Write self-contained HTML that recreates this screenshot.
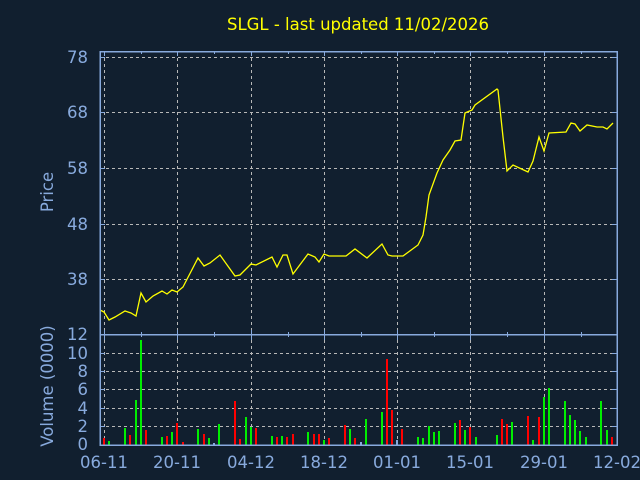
<!DOCTYPE html>
<html><head><meta charset="utf-8"><style>
html,body{margin:0;padding:0;background:#111f2f;width:640px;height:480px;overflow:hidden}
svg{display:block}
text{font-family:"DejaVu Sans","Liberation Sans",sans-serif}
</style></head><body>
<svg width="640" height="480" viewBox="0 0 640 480" xmlns="http://www.w3.org/2000/svg">
<rect width="640" height="480" fill="#111f2f"/>
<text x="358" y="30" fill="#ffff00" font-size="16.5" text-anchor="middle">SLGL - last updated 11/02/2026</text>
<g stroke="#b8b8b8" stroke-width="1" stroke-dasharray="3,3" shape-rendering="crispEdges">
<line x1="100" y1="57.5" x2="617" y2="57.5"/>
<line x1="100" y1="112.5" x2="617" y2="112.5"/>
<line x1="100" y1="168.5" x2="617" y2="168.5"/>
<line x1="100" y1="224.5" x2="617" y2="224.5"/>
<line x1="100" y1="279.5" x2="617" y2="279.5"/>
<line x1="100" y1="353.5" x2="617" y2="353.5"/>
<line x1="100" y1="371.5" x2="617" y2="371.5"/>
<line x1="100" y1="389.5" x2="617" y2="389.5"/>
<line x1="100" y1="408.5" x2="617" y2="408.5"/>
<line x1="100" y1="426.5" x2="617" y2="426.5"/>
<g>
<line x1="104.5" y1="52" x2="104.5" y2="445"/>
<line x1="177.5" y1="52" x2="177.5" y2="445"/>
<line x1="251.5" y1="52" x2="251.5" y2="445"/>
<line x1="324.5" y1="52" x2="324.5" y2="445"/>
<line x1="397.5" y1="52" x2="397.5" y2="445"/>
<line x1="470.5" y1="52" x2="470.5" y2="445"/>
<line x1="544.5" y1="52" x2="544.5" y2="445"/>
</g>
</g>
<g stroke-width="2" shape-rendering="crispEdges">
<g stroke="#ff0000">
<line x1="104" y1="445" x2="104" y2="438"/><line x1="130" y1="445" x2="130" y2="435"/><line x1="146" y1="445" x2="146" y2="430"/><line x1="167" y1="445" x2="167" y2="436"/><line x1="177" y1="445" x2="177" y2="423"/><line x1="183" y1="445" x2="183" y2="442"/><line x1="204" y1="445" x2="204" y2="434"/><line x1="235" y1="445" x2="235" y2="401"/><line x1="240" y1="445" x2="240" y2="439"/><line x1="256" y1="445" x2="256" y2="428"/><line x1="277" y1="445" x2="277" y2="437"/><line x1="287" y1="445" x2="287" y2="437"/><line x1="293" y1="445" x2="293" y2="434"/><line x1="314" y1="445" x2="314" y2="434"/><line x1="319" y1="445" x2="319" y2="434"/><line x1="329" y1="445" x2="329" y2="438"/><line x1="345" y1="445" x2="345" y2="425"/><line x1="355" y1="445" x2="355" y2="438"/><line x1="387" y1="445" x2="387" y2="359"/><line x1="392" y1="445" x2="392" y2="410"/><line x1="402" y1="445" x2="402" y2="429"/><line x1="460" y1="445" x2="460" y2="420"/><line x1="470" y1="445" x2="470" y2="427"/><line x1="502" y1="445" x2="502" y2="419"/><line x1="507" y1="445" x2="507" y2="424"/><line x1="528" y1="445" x2="528" y2="416"/><line x1="539" y1="445" x2="539" y2="417"/><line x1="612" y1="445" x2="612" y2="437"/>
</g>
<g stroke="#00ee00">
<line x1="109" y1="445" x2="109" y2="441"/><line x1="125" y1="445" x2="125" y2="428"/><line x1="136" y1="445" x2="136" y2="400"/><line x1="141" y1="445" x2="141" y2="340"/><line x1="162" y1="445" x2="162" y2="437"/><line x1="172" y1="445" x2="172" y2="432"/><line x1="198" y1="445" x2="198" y2="429"/><line x1="209" y1="445" x2="209" y2="438"/><line x1="219" y1="445" x2="219" y2="424"/><line x1="246" y1="445" x2="246" y2="417"/><line x1="251" y1="445" x2="251" y2="427"/><line x1="272" y1="445" x2="272" y2="436"/><line x1="282" y1="445" x2="282" y2="436"/><line x1="308" y1="445" x2="308" y2="432"/><line x1="324" y1="445" x2="324" y2="440"/><line x1="350" y1="445" x2="350" y2="429"/><line x1="366" y1="445" x2="366" y2="419"/><line x1="382" y1="445" x2="382" y2="412"/><line x1="418" y1="445" x2="418" y2="437"/><line x1="423" y1="445" x2="423" y2="438"/><line x1="429" y1="445" x2="429" y2="426"/><line x1="434" y1="445" x2="434" y2="432"/><line x1="439" y1="445" x2="439" y2="431"/><line x1="455" y1="445" x2="455" y2="423"/><line x1="465" y1="445" x2="465" y2="430"/><line x1="476" y1="445" x2="476" y2="437"/><line x1="497" y1="445" x2="497" y2="435"/><line x1="512" y1="445" x2="512" y2="422"/><line x1="533" y1="445" x2="533" y2="440"/><line x1="544" y1="445" x2="544" y2="397"/><line x1="549" y1="445" x2="549" y2="388"/><line x1="565" y1="445" x2="565" y2="401"/><line x1="570" y1="445" x2="570" y2="415"/><line x1="575" y1="445" x2="575" y2="420"/><line x1="580" y1="445" x2="580" y2="431"/><line x1="586" y1="445" x2="586" y2="437"/><line x1="601" y1="445" x2="601" y2="401"/><line x1="607" y1="445" x2="607" y2="430"/>
</g>
<g stroke="#88aadd"><line x1="214" y1="445" x2="214" y2="443"/><line x1="361" y1="445" x2="361" y2="442"/><line x1="397" y1="445" x2="397" y2="440"/></g>
</g>
<polyline fill="none" stroke="#ffff00" stroke-width="1.3" points="100,310 104,312 109,320 115,317 125,311 131,313 136,316 141,293 146,302 153,296 162,291 167,294 172,290 177,292 183,287 198,258 204,266 210,263 220,255 235,276 240,275 251,264 256,265 272,257 277,267 283,255 287,255 293,274 308,254 315,257 319,262 324,254 329,256 346,256 355,249 367,258 382,244 388,255 392,256 403,256 418,245 423,235 426,217 429,195 437,173 443,160 450,150 455,141 461,140 465,113 472,110 475,105 497,89 498,90 503,137 507,171 513,165 528,172 533,161 539,137 544,151 549,133 566,132 571,123 575,124 580,131 587,125 597,127 603,127 607,129 613,123"/>
<g stroke="#88aadd" stroke-width="1.5" fill="none" shape-rendering="crispEdges">
<rect x="100" y="51.5" width="517" height="393.5"/>
<line x1="100" y1="334.5" x2="617" y2="334.5"/>
<g stroke-width="1">
<line x1="100" y1="57.5" x2="105" y2="57.5"/><line x1="100" y1="112.5" x2="105" y2="112.5"/><line x1="100" y1="168.5" x2="105" y2="168.5"/><line x1="100" y1="224.5" x2="105" y2="224.5"/><line x1="100" y1="279.5" x2="105" y2="279.5"/>
<line x1="612" y1="57.5" x2="617" y2="57.5"/><line x1="612" y1="112.5" x2="617" y2="112.5"/><line x1="612" y1="168.5" x2="617" y2="168.5"/><line x1="612" y1="224.5" x2="617" y2="224.5"/><line x1="612" y1="279.5" x2="617" y2="279.5"/>
<line x1="100" y1="353.5" x2="105" y2="353.5"/><line x1="100" y1="371.5" x2="105" y2="371.5"/><line x1="100" y1="389.5" x2="105" y2="389.5"/><line x1="100" y1="408.5" x2="105" y2="408.5"/><line x1="100" y1="426.5" x2="105" y2="426.5"/>
<line x1="612" y1="353.5" x2="617" y2="353.5"/><line x1="612" y1="371.5" x2="617" y2="371.5"/><line x1="612" y1="389.5" x2="617" y2="389.5"/><line x1="612" y1="408.5" x2="617" y2="408.5"/><line x1="612" y1="426.5" x2="617" y2="426.5"/>
<line x1="104.5" y1="51" x2="104.5" y2="56"/><line x1="141.5" y1="51" x2="141.5" y2="54"/><line x1="177.5" y1="51" x2="177.5" y2="56"/><line x1="214.5" y1="51" x2="214.5" y2="54"/><line x1="251.5" y1="51" x2="251.5" y2="56"/><line x1="288.5" y1="51" x2="288.5" y2="54"/><line x1="324.5" y1="51" x2="324.5" y2="56"/><line x1="361.5" y1="51" x2="361.5" y2="54"/><line x1="397.5" y1="51" x2="397.5" y2="56"/><line x1="434.5" y1="51" x2="434.5" y2="54"/><line x1="470.5" y1="51" x2="470.5" y2="56"/><line x1="507.5" y1="51" x2="507.5" y2="54"/><line x1="544.5" y1="51" x2="544.5" y2="56"/><line x1="581.5" y1="51" x2="581.5" y2="54"/>
<line x1="104.5" y1="330" x2="104.5" y2="340"/><line x1="141.5" y1="332" x2="141.5" y2="337"/><line x1="177.5" y1="330" x2="177.5" y2="340"/><line x1="214.5" y1="332" x2="214.5" y2="337"/><line x1="251.5" y1="330" x2="251.5" y2="340"/><line x1="288.5" y1="332" x2="288.5" y2="337"/><line x1="324.5" y1="330" x2="324.5" y2="340"/><line x1="361.5" y1="332" x2="361.5" y2="337"/><line x1="397.5" y1="330" x2="397.5" y2="340"/><line x1="434.5" y1="332" x2="434.5" y2="337"/><line x1="470.5" y1="330" x2="470.5" y2="340"/><line x1="507.5" y1="332" x2="507.5" y2="337"/><line x1="544.5" y1="330" x2="544.5" y2="340"/><line x1="581.5" y1="332" x2="581.5" y2="337"/>
</g>
</g>
<g fill="#88aadd" font-size="16.5" text-anchor="end">
<text x="88" y="63">78</text><text x="88" y="118">68</text><text x="88" y="174">58</text><text x="88" y="230">48</text><text x="88" y="285">38</text>
<text x="88" y="340">12</text><text x="88" y="359">10</text><text x="88" y="377">8</text><text x="88" y="395">6</text><text x="88" y="414">4</text><text x="88" y="432">2</text><text x="88" y="450">0</text>
</g>
<g fill="#88aadd" font-size="16.5" text-anchor="middle">
<text x="104" y="468">06-11</text><text x="177" y="468">20-11</text><text x="251" y="468">04-12</text><text x="324" y="468">18-12</text><text x="397" y="468">01-01</text><text x="470" y="468">15-01</text><text x="544" y="468">29-01</text><text x="617" y="468">12-02</text>
<text transform="translate(53,192) rotate(-90)">Price</text>
<text transform="translate(53,386) rotate(-90)">Volume (0000)</text>
</g>
</svg>
</body></html>
